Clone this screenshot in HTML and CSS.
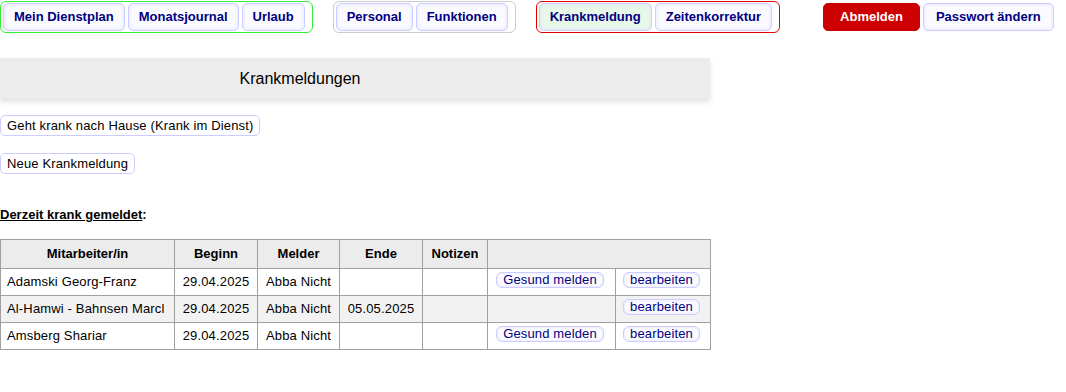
FILE: index.html
```html
<!DOCTYPE html>
<html lang="de">
<head>
  <meta charset="UTF-8">
  <title>Krankmeldungen</title>
  <link rel="stylesheet" href="styles.css">
</head>
<body>

  <!-- Navigation -->
  <div class="nav">
    <div class="nav-group green">
      <a class="nav-btn">Mein Dienstplan</a>
      <a class="nav-btn">Monatsjournal</a>
      <a class="nav-btn">Urlaub</a>
    </div>
    <div class="nav-group grey">
      <a class="nav-btn">Personal</a>
      <a class="nav-btn">Funktionen</a>
    </div>
    <div class="nav-group red">
      <a class="nav-btn active">Krankmeldung</a>
      <a class="nav-btn">Zeitenkorrektur</a>
    </div>
    <div class="nav-group plain">
      <a class="nav-btn logout">Abmelden</a>
      <a class="nav-btn wide">Passwort ändern</a>
    </div>
  </div>

  <div class="content">
    <h1 class="page-title">Krankmeldungen</h1>

    <div class="actions">
      <button class="btn">Geht krank nach Hause (Krank im Dienst)</button>
      <button class="btn">Neue Krankmeldung</button>
    </div>

    <p class="list-title"><u>Derzeit krank gemeldet</u>:</p>

    <table class="sick-list">
      <thead>
        <tr>
          <th class="c-name">Mitarbeiter/in</th>
          <th class="c-date">Beginn</th>
          <th class="c-by">Melder</th>
          <th class="c-end">Ende</th>
          <th class="c-note">Notizen</th>
          <th colspan="2"></th>
        </tr>
      </thead>
      <tbody>
        <tr>
          <td>Adamski Georg-Franz</td>
          <td class="center">29.04.2025</td>
          <td class="center">Abba Nicht</td>
          <td class="center"></td>
          <td></td>
          <td class="c-act1 center"><button class="btn-small">Gesund melden</button></td>
          <td class="c-act2 center"><button class="btn-small">bearbeiten</button></td>
        </tr>
        <tr>
          <td>Al-Hamwi - Bahnsen Marcl</td>
          <td class="center">29.04.2025</td>
          <td class="center">Abba Nicht</td>
          <td class="center">05.05.2025</td>
          <td></td>
          <td class="c-act1 center"></td>
          <td class="c-act2 center"><button class="btn-small">bearbeiten</button></td>
        </tr>
        <tr>
          <td>Amsberg Shariar</td>
          <td class="center">29.04.2025</td>
          <td class="center">Abba Nicht</td>
          <td class="center"></td>
          <td></td>
          <td class="c-act1 center"><button class="btn-small">Gesund melden</button></td>
          <td class="c-act2 center"><button class="btn-small">bearbeiten</button></td>
        </tr>
      </tbody>
    </table>
  </div>

</body>
</html>
```

FILE: styles.css
```css
/* Grundlayout */
body {
  margin: 0;
  font-family: "Liberation Sans", Arial, sans-serif;
  font-size: 13px;
  color: #000;
  background: #fff;
}

/* Navigation oben */
.nav {
  display: flex;
  align-items: flex-start;
  padding-top: 1px;
}

.nav-group {
  display: flex;
  gap: 3px;
  padding: 1px 7px 1px 2px;
  border: 1px solid transparent;
  border-radius: 6px;
  margin-right: 20px;
}

.nav-group.green { border-color: #33ee33; }
.nav-group.grey { border-color: #cccccc; }
.nav-group.red { border-color: #e00000; margin-right: 40px; }
.nav-group.plain { margin-right: 0; }

.nav-btn {
  display: block;
  padding: 6px 10px;
  line-height: 14px;
  font-weight: bold;
  color: #000080;
  background: #fbfbff;
  border: 1px solid #ccccff;
  border-radius: 5px;
  box-shadow: inset 0 0 4px #e0e0ff;
  cursor: pointer;
}

.nav-btn.active {
  background: #e8f8e8;
}

.nav-btn.logout {
  background: #cc0000;
  border-color: #cc0000;
  color: #fff;
  box-shadow: none;
  padding: 6px 16px;
}

.nav-btn.wide {
  padding: 6px 12px;
}

/* Inhalt */
.content {
  width: 710px;
}

.page-title {
  margin: 25px 0 0;
  padding: 11px 110px 11px 0;
  font-size: 16px;
  font-weight: normal;
  line-height: 19px;
  text-align: center;
  background: #ececec;
  box-shadow: 0 3px 5px rgba(0, 0, 0, 0.12);
}

.actions {
  display: flex;
  flex-direction: column;
  align-items: flex-start;
  gap: 17px;
  margin-top: 16px;
}

.btn {
  font-family: inherit;
  font-size: 13px;
  line-height: 15px;
  letter-spacing: 0.15px;
  padding: 2px 6px;
  color: #000;
  background: #fff;
  border: 1px solid #ccccff;
  border-radius: 5px;
  cursor: pointer;
}

.list-title {
  margin: 33px 0 17px;
  font-weight: bold;
}

/* Tabelle */
.sick-list {
  width: 711px;
  border-collapse: collapse;
}

.sick-list th,
.sick-list td {
  border: 1px solid #a0a0a0;
  padding: 5px 6px;
  line-height: 16px;
  white-space: nowrap;
}

.sick-list td {
  letter-spacing: 0.15px;
}

.sick-list th {
  background: #ececec;
  padding: 6px;
}

.sick-list tbody tr:nth-child(2) td {
  background: #f2f2f2;
}

.center { text-align: center; }

.c-name { width: 161px; }
.c-date { width: 70px; }
.c-by { width: 69px; }
.c-end { width: 70px; }
.c-note { width: 52px; }
.c-act1 { width: 112px; }
.sick-list td.c-act1,
.sick-list td.c-act2 { padding: 3px 9px 7px 6px; }

.btn-small {
  font-family: inherit;
  font-size: 13px;
  line-height: 14px;
  letter-spacing: 0.15px;
  padding: 0 6px;
  color: #000080;
  background: #fbfbff;
  border: 1px solid #ccccff;
  border-radius: 6px;
  box-shadow: inset 0 0 3px #e0e0ff;
  cursor: pointer;
}
```
